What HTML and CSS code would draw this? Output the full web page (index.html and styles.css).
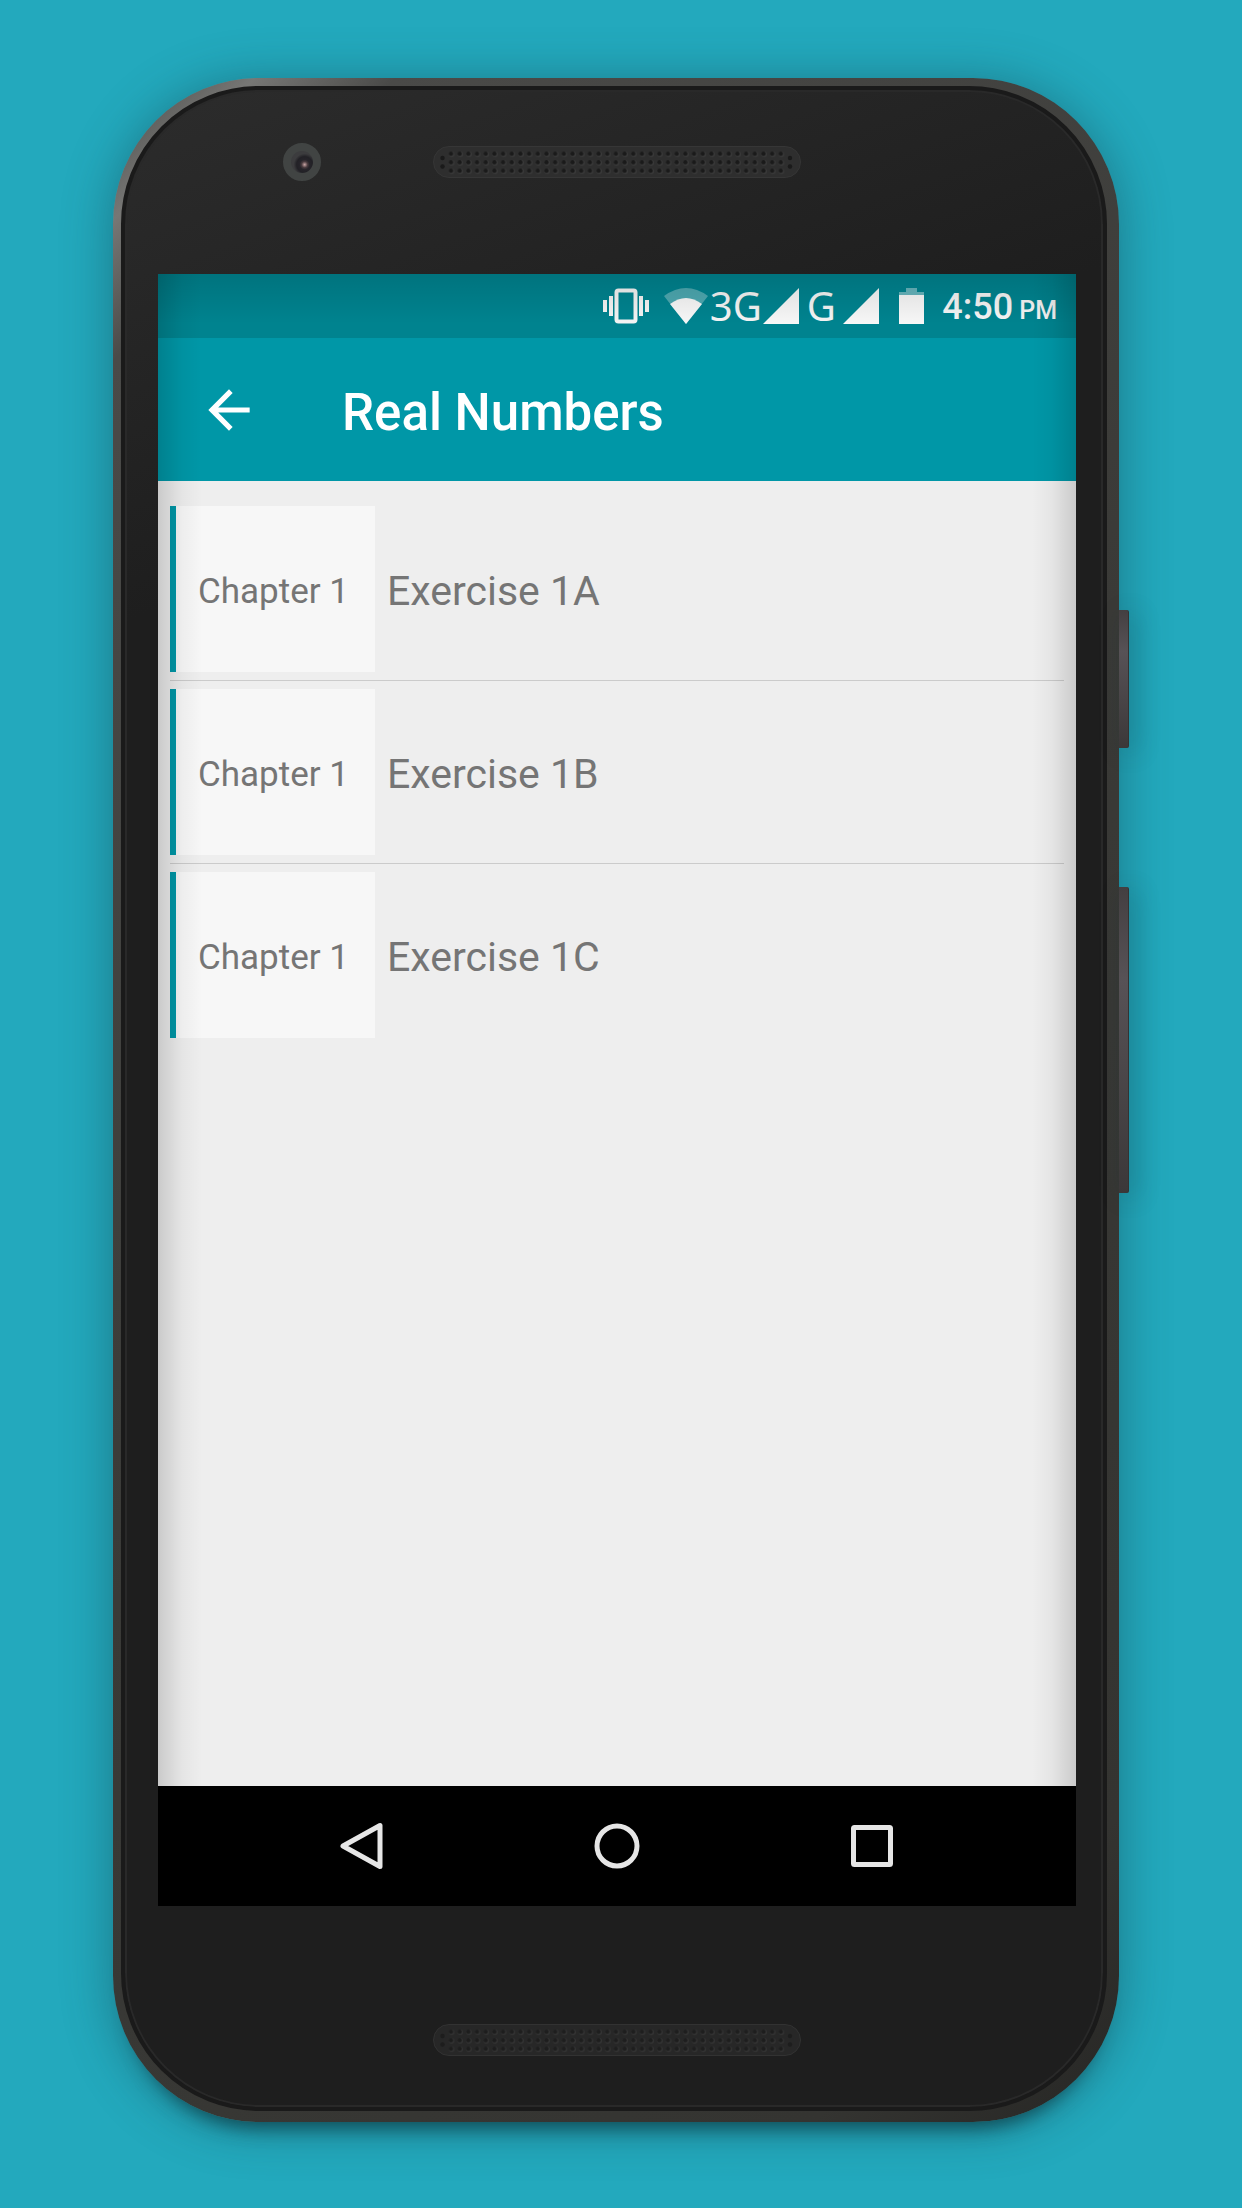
FILE: index.html
```html
<!DOCTYPE html>
<html lang="en">
<head>
    <meta charset="UTF-8">
    <meta name="viewport" content="width=device-width, initial-scale=1.0">
    <title>Real Numbers</title>
    <link rel="stylesheet" href="styles.css">
</head>
<body>
    <div class="phone">
        <span class="side-key power"></span>
        <span class="side-key volume"></span>
        <div class="face">
            <div class="bezel-top">
                <span class="camera"></span>
                <svg class="speaker" viewBox="0 0 368 32">
                    <defs>
                        <pattern id="holes" x="13.7" y="3.6" width="8.68" height="8.5" patternUnits="userSpaceOnUse">
                            <circle cx="4.9" cy="4.8" r="2.8" fill="#3a3a3a"/>
                            <circle cx="4.3" cy="4.2" r="2.2" fill="#1a1a1a"/>
                        </pattern>
                    </defs>
                    <rect x="0.5" y="0.5" width="367" height="31" rx="15.5" fill="#2e2e2e" stroke="#363636"/>
                    <rect x="13.7" y="3.6" width="338.6" height="25.5" fill="url(#holes)"/>
                    <g fill="#1a1a1a">
                        <circle cx="9.5" cy="12" r="2.2"/>
                        <circle cx="9.5" cy="20.5" r="2.2"/>
                        <circle cx="357" cy="12" r="2.2"/>
                        <circle cx="357" cy="20.5" r="2.2"/>
                    </g>
                </svg>
            </div>
            <div class="screen">
                <div class="app">
                    <div class="status-bar">
                        <svg class="vibrate" viewBox="0 0 46 36" fill="#f4f4f4">
                            <rect x="13.5" y="2.5" width="19" height="31" rx="2" fill="none" stroke="#f4f4f4" stroke-width="4"/>
                            <rect x="0" y="12" width="4" height="12"/>
                            <rect x="6" y="8" width="4" height="20"/>
                            <rect x="36" y="8" width="4" height="20"/>
                            <rect x="42" y="12" width="4" height="12"/>
                        </svg>
                        <svg class="wifi" viewBox="0 0 44 36">
                            <path d="M22 36L0 8Q22-8 44 8z" fill="#fff" opacity=".3"/>
                            <path d="M22 36L6 16Q22 4 38 16z" fill="#f7f7f7"/>
                        </svg>
                        <span class="net">3G</span>
                        <svg class="signal" viewBox="0 0 36 36"><path d="M36 0V36H0z" fill="#f7f7f7"/></svg>
                        <span class="net second">G</span>
                        <svg class="signal" viewBox="0 0 36 36"><path d="M36 0V36H0z" fill="#f7f7f7"/></svg>
                        <svg class="battery" viewBox="0 0 25 36">
                            <path d="M7 0H18V4H25V7H0V4H7z" fill="#fff" opacity=".4"/>
                            <rect y="7" width="25" height="29" fill="#f7f7f7"/>
                        </svg>
                        <span class="clock"><span>4:50</span><small>PM</small></span>
                    </div>
                    <div class="toolbar">
                        <button class="back" aria-label="Back">
                            <svg viewBox="0 0 24 24"><path d="M20 11H7.83l5.59-5.59L12 4l-8 8 8 8 1.41-1.41L7.83 13H20v-2z" fill="#fff"/></svg>
                        </button>
                        <h1>Real Numbers</h1>
                    </div>
                    <ul class="list">
                        <li><span class="chapter">Chapter 1</span><span class="exercise">Exercise 1A</span></li>
                        <li><span class="chapter">Chapter 1</span><span class="exercise">Exercise 1B</span></li>
                        <li><span class="chapter">Chapter 1</span><span class="exercise">Exercise 1C</span></li>
                    </ul>
                </div>
                <div class="nav-bar">
                    <button aria-label="Back">
                        <svg viewBox="0 0 48 48"><path d="M42 3.5V44.500L5 24z" class="line"/></svg>
                    </button>
                    <button aria-label="Home">
                        <svg viewBox="0 0 48 48"><circle cx="24" cy="24" r="20" class="line"/></svg>
                    </button>
                    <button aria-label="Recent apps">
                        <svg viewBox="0 0 48 48"><rect x="5.500" y="5.500" width="37" height="37" rx="1" class="line"/></svg>
                    </button>
                </div>
            </div>
            <div class="bezel-bottom">
                <svg class="speaker" viewBox="0 0 368 32">
                    <rect x="0.5" y="0.5" width="367" height="31" rx="15.5" fill="#272727" stroke="#323232"/>
                    <g opacity=".7">
                        <rect x="13.7" y="3.6" width="338.6" height="25.5" fill="url(#holes)"/>
                        <g fill="#1a1a1a">
                            <circle cx="9.5" cy="12" r="2.2"/>
                            <circle cx="9.5" cy="20.5" r="2.2"/>
                            <circle cx="357" cy="12" r="2.2"/>
                            <circle cx="357" cy="20.5" r="2.2"/>
                        </g>
                    </g>
                </svg>
            </div>
        </div>
    </div>
</body>
</html>
```

FILE: styles.css
```css
*{
    margin: 0px;
    padding: 0px;
    box-sizing: border-box;
}
body{
    min-height: 100vh;
    display: flex;
    padding: 78px 123px 86px 113px;
    background-color: #23a9bd;
    font-family: Roboto, "Liberation Sans", sans-serif;
}
svg{
    display: block;
}
button{
    border: none;
    background: none;
    cursor: pointer;
}

/* phone frame */
.phone{
    position: relative;
    flex: 1;
    display: flex;
    padding: 8px 12px 11px 8px;
    border-radius: 146px;
    background: linear-gradient(135deg, #444442 0px, #777775 100px, #4a4a48 200px, #3a3a37 50%, #343431 90%, #262624 100%);
    box-shadow: 0px 4px 50px rgba(20, 60, 68, .45), 0px 24px 18px -18px rgba(10, 50, 58, .7);
}
.face{
    flex: 1;
    display: flex;
    flex-direction: column;
    padding: 0px 27px 0px 33px;
    border: 4px solid #1a1a1a;
    border-radius: 138px;
    background: linear-gradient(160deg, #2c2c2c 0px, #1e1e1e 500px);
    box-shadow: inset 0px 0px 0px 2px #292929;
}
.side-key{
    position: absolute;
    right: -10px;
    width: 10px;
    border-right: 1px solid #333;
    border-radius: 0px 2px 2px 0px;
    background: linear-gradient(#433f41, #575256 30%, #3b3839);
    box-shadow: 6px 4px 24px rgba(10, 50, 58, .3);
}
.power{
    top: 532px;
    height: 138px;
}
.volume{
    top: 809px;
    height: 306px;
}
.bezel-top{
    display: grid;
    grid-template-columns: 1fr 368px 1fr;
    align-items: center;
    height: 184px;
    padding-bottom: 40px;
}
.bezel-bottom{
    display: grid;
    justify-content: center;
    align-items: center;
    height: 201px;
    padding-top: 66px;
}
.speaker{
    width: 368px;
    height: 32px;
}
.camera{
    justify-self: center;
    width: 38px;
    height: 38px;
    margin-left: 12px;
    border: 8px solid #414443;
    border-radius: 50%;
    background: radial-gradient(circle at 62% 62%, #c9a5a5 0px, #4a3c40 3px, #26242a 5px, #222126 8px, #3c3c3e 11px);
}

/* screen */
.screen{
    flex: 1;
    display: flex;
    flex-direction: column;
}
.app{
    position: relative;
    flex: 1;
    display: flex;
    flex-direction: column;
    background-color: #eee;
}
.app::after{
    content: "";
    position: absolute;
    inset: 0px;
    background:
        linear-gradient(rgba(0, 0, 0, .12), transparent 50px),
        linear-gradient(90deg, rgba(0, 0, 0, .15), rgba(0, 0, 0, .04) 24px, transparent 44px),
        linear-gradient(270deg, rgba(0, 0, 0, .15), rgba(0, 0, 0, .04) 24px, transparent 44px);
    pointer-events: none;
}
.status-bar{
    display: flex;
    justify-content: flex-end;
    align-items: center;
    height: 64px;
    padding-right: 19px;
    background-color: #00838f;
    color: #f4f4f4;
}
.vibrate{
    width: 46px;
    height: 36px;
    margin-right: 15px;
}
.wifi{
    width: 44px;
    height: 36px;
}
.signal{
    width: 36px;
    height: 36px;
}
.net{
    width: 55px;
    text-align: center;
    font-family: "Noto Sans", "Open Sans", sans-serif;
    font-size: 40px;
    line-height: 64px;
}
.second{
    width: 44px;
}
.battery{
    width: 25px;
    height: 36px;
    margin: 0px 18px 0px 20px;
}
.clock{
    display: flex;
    align-items: baseline;
    gap: 6px;
    padding-top: 6px;
    font-size: 36px;
    font-weight: 500;
    line-height: 58px;
}
.clock small{
    font-size: 25px;
}
.toolbar{
    display: flex;
    align-items: center;
    height: 143px;
    padding-left: 40px;
    background-color: #0097a7;
    color: #fff;
}
.back svg{
    width: 62px;
    height: 62px;
}
.toolbar h1{
    padding-top: 6px;
    margin-left: 82px;
    font-size: 51px;
    font-weight: 500;
    line-height: 64px;
}
.list{
    padding: 17px 12px;
    list-style: none;
}
.list li{
    display: flex;
    align-items: center;
    padding: 8px 0px;
    border-bottom: 1px solid #cbcbcb;
    color: #757575;
}
.list li:last-child{
    border-bottom: none;
}
.chapter{
    width: 205px;
    height: 166px;
    padding-right: 4px;
    border-left: 6px solid #0097a7;
    background-color: #f7f7f7;
    text-align: center;
    font-size: 35px;
    line-height: 172px;
}
.exercise{
    padding-top: 4px;
    margin-left: 12px;
    font-size: 41px;
    line-height: 64px;
}
.nav-bar{
    display: flex;
    justify-content: center;
    align-items: center;
    gap: 207px;
    height: 120px;
    background-color: #000;
}
.nav-bar svg{
    width: 48px;
    height: 48px;
}
.line{
    fill: none;
    stroke: #e6e6e6;
    stroke-width: 5px;
    stroke-linejoin: round;
}
```
